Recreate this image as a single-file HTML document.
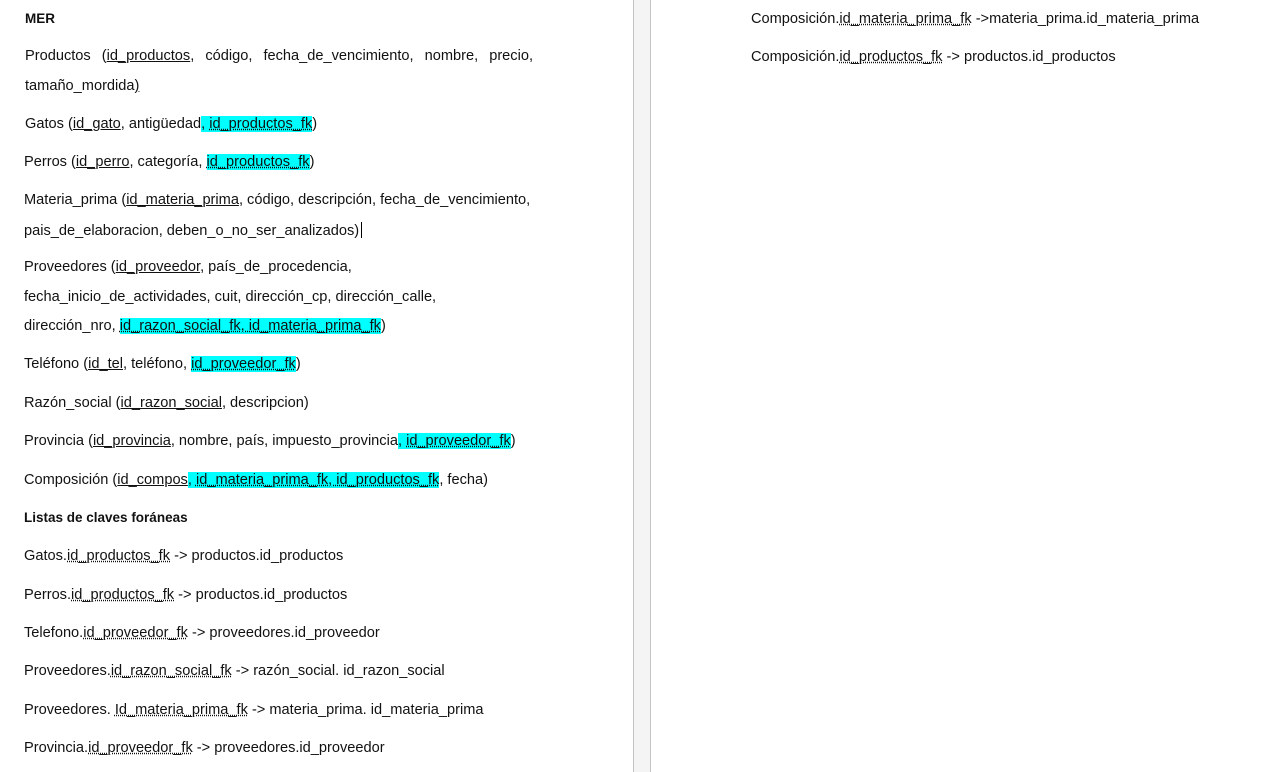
<!DOCTYPE html>
<html><head><meta charset="utf-8"><style>
body{margin:0;width:1274px;height:772px;background:#fff;position:relative;overflow:hidden;font-family:"Liberation Sans",sans-serif;font-size:14.6px;color:#111}
.l{position:absolute;white-space:nowrap;line-height:16px}
u{text-decoration:underline}
.d{text-decoration:underline dotted;}
.h{background:#00ffff}
.gap{position:absolute;left:633px;top:0;width:16px;height:772px;background:#f4f4f4;border-left:1px solid #c4c4c4;border-right:1px solid #c4c4c4}
b{font-weight:bold}
.c{display:inline-block;width:1px;height:16px;background:#000;vertical-align:-3px;margin-left:2px}
</style></head><body>
<div class="gap"></div>
<div class="l" style="left:25px;top:11px;font-size:13.5px"><b>MER</b></div>
<div class="l" style="left:25px;top:48px;width:508px;text-align:justify;text-align-last:justify;white-space:normal">Productos (<u>id_productos</u>, código, fecha_de_vencimiento, nombre, precio,</div>
<div class="l" style="left:25px;top:78px">tamaño_mordida<u>)</u></div>
<div class="l" style="left:25px;top:116px">Gatos (<u>id_gato</u>, antigüedad<span class="h">, <span class="d">id_productos_fk</span></span>)</div>
<div class="l" style="left:24px;top:154px">Perros (<u>id_perro</u>, categoría, <span class="h d">id_productos_fk</span>)</div>
<div class="l" style="left:24px;top:192px">Materia_prima (<u>id_materia_prima</u>, código, descripción, fecha_de_vencimiento,</div>
<div class="l" style="left:24px;top:222px">pais_de_elaboracion, deben_o_no_ser_analizados)<span class="c"></span></div>
<div class="l" style="left:24px;top:259px">Proveedores (<u>id_proveedor</u>, país_de_procedencia,</div>
<div class="l" style="left:24px;top:289px">fecha_inicio_de_actividades, cuit, dirección_cp, dirección_calle,</div>
<div class="l" style="left:24px;top:318px">dirección_nro, <span class="h d">id_razon_social_fk, id_materia_prima_fk</span>)</div>
<div class="l" style="left:24px;top:356px">Teléfono (<u>id_tel</u>, teléfono, <span class="h d">id_proveedor_fk</span>)</div>
<div class="l" style="left:24px;top:395px">Razón_social (<u>id_razon_social</u>, descripcion)</div>
<div class="l" style="left:24px;top:433px">Provincia (<u>id_provincia</u>, nombre, país, impuesto_provincia<span class="h">, <span class="d">id_proveedor_fk</span></span>)</div>
<div class="l" style="left:24px;top:472px">Composición (<u>id_compos</u><span class="h">, <span class="d">id_materia_prima_fk, id_productos_fk</span></span>, fecha)</div>
<div class="l" style="left:24px;top:510px;font-size:13.5px"><b>Listas de claves foráneas</b></div>
<div class="l" style="left:24px;top:548px">Gatos.<span class="d">id_productos_fk</span> -&gt; productos.id_productos</div>
<div class="l" style="left:24px;top:587px">Perros.<span class="d">id_productos_fk</span> -&gt; productos.id_productos</div>
<div class="l" style="left:24px;top:625px">Telefono.<span class="d">id_proveedor_fk</span> -&gt; proveedores.id_proveedor</div>
<div class="l" style="left:24px;top:663px">Proveedores.<span class="d">id_razon_social_fk</span> -&gt; razón_social. id_razon_social</div>
<div class="l" style="left:24px;top:702px">Proveedores. <span class="d">Id_materia_prima_fk</span> -&gt; materia_prima. id_materia_prima</div>
<div class="l" style="left:24px;top:740px">Provincia.<span class="d">id_proveedor_fk</span> -&gt; proveedores.id_proveedor</div>
<div class="l" style="left:751px;top:11px">Composición.<span class="d">id_materia_prima_fk</span> -&gt;materia_prima.id_materia_prima</div>
<div class="l" style="left:751px;top:49px">Composición.<span class="d">id_productos_fk</span> -&gt; productos.id_productos</div>
</body></html>
